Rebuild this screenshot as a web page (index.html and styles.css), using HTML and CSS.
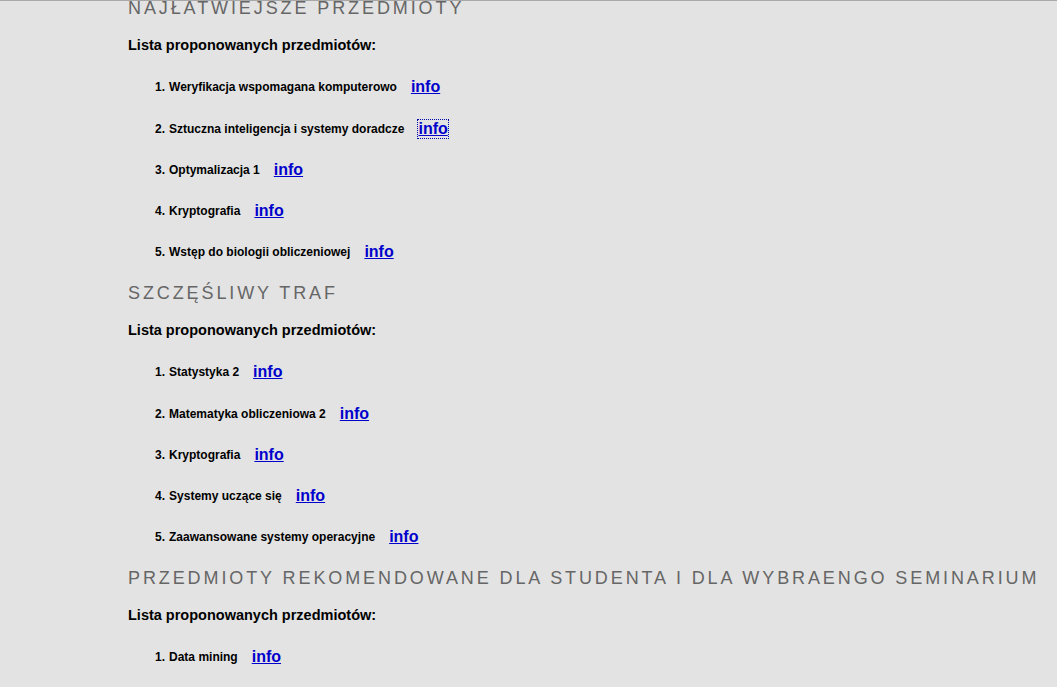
FILE: index.html
```html
<!DOCTYPE html>
<html lang="pl">
<head>
<meta charset="utf-8">
<title>Przedmioty</title>
<link rel="stylesheet" href="styles.css">
</head>
<body>
<div class="page">
  <section class="group">
    <h2 class="group-title">Najłatwiejsze przedmioty</h2>
    <p class="list-label">Lista proponowanych przedmiotów:</p>
    <ol class="subjects">
      <li><span class="name">Weryfikacja wspomagana komputerowo</span><a class="info" href="#">info</a></li>
      <li><span class="name">Sztuczna inteligencja i systemy doradcze</span><a class="info focused" href="#">info</a></li>
      <li><span class="name">Optymalizacja 1</span><a class="info" href="#">info</a></li>
      <li><span class="name">Kryptografia</span><a class="info" href="#">info</a></li>
      <li><span class="name">Wstęp do biologii obliczeniowej</span><a class="info" href="#">info</a></li>
    </ol>
  </section>
  <section class="group">
    <h2 class="group-title">Szczęśliwy traf</h2>
    <p class="list-label">Lista proponowanych przedmiotów:</p>
    <ol class="subjects">
      <li><span class="name">Statystyka 2</span><a class="info" href="#">info</a></li>
      <li><span class="name">Matematyka obliczeniowa 2</span><a class="info" href="#">info</a></li>
      <li><span class="name">Kryptografia</span><a class="info" href="#">info</a></li>
      <li><span class="name">Systemy uczące się</span><a class="info" href="#">info</a></li>
      <li><span class="name">Zaawansowane systemy operacyjne</span><a class="info" href="#">info</a></li>
    </ol>
  </section>
  <section class="group">
    <h2 class="group-title">Przedmioty rekomendowane dla studenta i dla wybraengo seminarium</h2>
    <p class="list-label">Lista proponowanych przedmiotów:</p>
    <ol class="subjects">
      <li><span class="name">Data mining</span><a class="info" href="#">info</a></li>
    </ol>
  </section>
</div>
</body>
</html>
```
FILE: styles.css
```css
html, body {
  margin: 0;
  padding: 0;
  background: #e3e3e3;
  height: 100%;
  overflow: hidden;
}
body {
  border-top: 1px solid #a8a8a8;
  box-sizing: border-box;
  font-family: "Liberation Sans", Arial, sans-serif;
  color: #000;
}
.page {
  padding-left: 128px;
  margin-top: -4px;
}
.group-title {
  margin: 0;
  font-size: 18px;
  font-weight: normal;
  text-transform: uppercase;
  letter-spacing: 2.9px;
  color: #666;
  line-height: 22px;
  padding: 0;
  white-space: nowrap;
}
.list-label {
  margin: 17px 0 0;
  font-size: 14.5px;
  font-weight: bold;
  line-height: 18px;
}
.subjects {
  margin: 0;
  padding: 2px 0 0 27px;
  list-style: none;
  counter-reset: item;
}
.subjects li {
  counter-increment: item;
  margin-top: 21.3px;
  height: 20px;
  display: flex;
  align-items: center;
  gap: 14px;
  font-size: 12px;
  font-weight: bold;
}
.subjects li::before {
  content: counter(item) ".";
  margin-right: -10px;
}
.info {
  font-size: 16px;
  font-weight: bold;
  color: #0000cc;
  text-decoration: underline;
  line-height: 18px;
}
.info.focused {
  outline: 1px dotted #0000aa;
}
.group + .group {
  margin-top: 19.5px;
}
```
